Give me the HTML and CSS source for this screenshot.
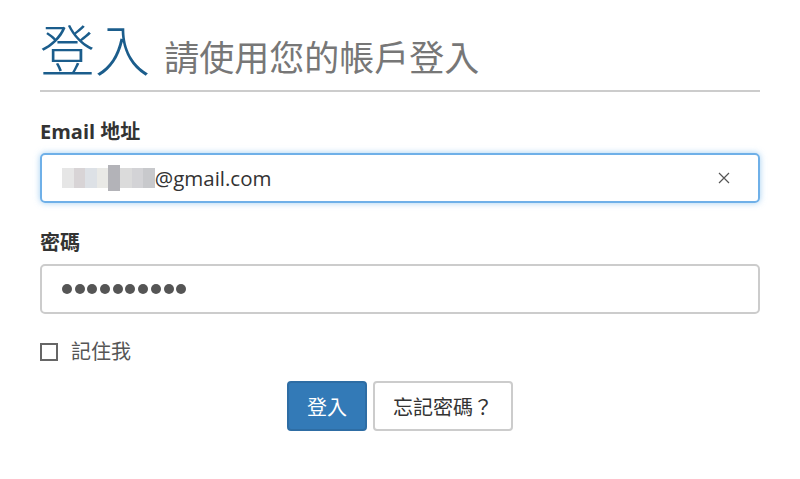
FILE: index.html
```html
<!DOCTYPE html>
<html lang="zh-Hant">
<head>
    <meta charset="utf-8">
    <title>登入</title>
    <link rel="stylesheet" href="styles.css">
</head>
<body>
<div class="container">
    <h1 class="page-title">登入 <small>請使用您的帳戶登入</small></h1>
    <form class="login-form">
        <div class="form-group">
            <label class="form-label">Email 地址</label>
            <div class="form-control focused">
                <span class="masked">
                    <span class="px" style="background:#e6e6e6"></span><span class="px" style="background:#d8d4d6"></span><span class="px" style="background:#dde1e6"></span><span class="px" style="background:#e9e9e6"></span><span class="px tall" style="background:#b3b3b8"></span><span class="px" style="background:#dbdbdb"></span><span class="px" style="background:#d3d3d6"></span><span class="px" style="background:#c8c9cc"></span>
                </span>
                <span class="email-text">@gmail.com</span>
                <svg class="clear-btn" width="12" height="12" viewBox="0 0 12 12">
                    <path d="M1 1 L11 11 M11 1 L1 11" stroke="#555" stroke-width="1.2" fill="none"/>
                </svg>
            </div>
        </div>
        <div class="form-group">
            <label class="form-label">密碼</label>
            <div class="form-control">
                <span class="dot"></span><span class="dot"></span><span class="dot"></span><span class="dot"></span><span class="dot"></span><span class="dot"></span><span class="dot"></span><span class="dot"></span><span class="dot"></span><span class="dot"></span>
            </div>
        </div>
        <label class="remember">
            <span class="checkbox"></span>記住我
        </label>
        <div class="actions">
            <button type="button" class="btn btn-primary">登入</button>
            <button type="button" class="btn btn-default">忘記密碼？</button>
        </div>
    </form>
</div>
</body>
</html>
```
FILE: styles.css
```css
body {
    margin: 0;
    background: #fff;
    font-family: 'Open Sans', 'Noto Sans CJK TC', sans-serif;
    color: #333;
}
.container {
    padding: 0 40px;
}
.page-title {
    margin: 0;
    padding: 12px 0 8px;
    border-bottom: 2px solid #ccc;
    font-family: 'Noto Sans CJK TC', sans-serif;
    font-weight: 300;
    font-size: 55px;
    line-height: 70px;
    color: #1b5d8c;
}
.page-title small {
    margin-left: 2px;
    font-size: 35px;
    line-height: 1;
    color: #777;
    font-weight: 400;
}
.login-form {
    padding-top: 26px;
}
.form-group {
    margin-bottom: 26px;
}
.form-label {
    display: block;
    margin-bottom: 7px;
    font-size: 20px;
    font-weight: 700;
    line-height: 28px;
    color: #333;
}
.form-control {
    box-sizing: border-box;
    display: flex;
    align-items: center;
    width: 100%;
    height: 50px;
    padding: 0 20px;
    border: 2px solid #ccc;
    border-radius: 5px;
    font-size: 20.5px;
    color: #333;
}
.form-control.focused {
    border-color: #6fb0e8;
    box-shadow: 0 0 6px rgba(102, 175, 233, 0.6);
}
.masked {
    display: flex;
    align-items: center;
    height: 26px;
}
.px {
    display: block;
    width: 11.6px;
    height: 20px;
}
.px.tall {
    height: 26px;
}
.email-text {
    flex: 1;
}
.clear-btn {
    margin-right: 8px;
}
.dot {
    width: 10px;
    height: 10px;
    margin-right: 2.7px;
    border-radius: 50%;
    background: #555;
}
.remember {
    display: flex;
    align-items: center;
    font-size: 20px;
    color: #555;
    line-height: 24px;
}
.checkbox {
    box-sizing: border-box;
    width: 18px;
    height: 18px;
    margin-right: 13px;
    border: 2px solid #666;
}
.actions {
    display: flex;
    justify-content: center;
    gap: 6px;
    margin-top: 17px;
}
.btn {
    box-sizing: border-box;
    height: 50px;
    padding: 0 18px;
    border: 2px solid #ccc;
    border-radius: 4px;
    font-family: 'Noto Sans CJK TC', sans-serif;
    font-size: 20px;
    cursor: pointer;
}
.btn-primary {
    background-color: #337ab7;
    border-color: #2e6da4;
    color: #fff;
}
.btn-default {
    background-color: #fff;
    color: #333;
}
```
